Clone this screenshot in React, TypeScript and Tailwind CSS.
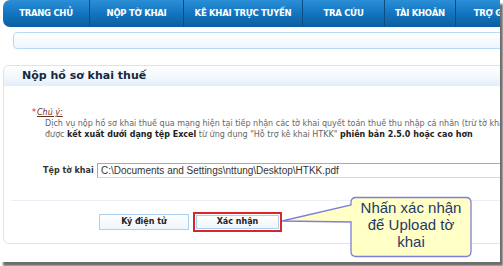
import React from "react";

const NAV = [
  { label: "TRANG CHỦ", w: "w-[86px]" },
  { label: "NỘP TỜ KHAI", w: "w-[94px]" },
  { label: "KÊ KHAI TRỰC TUYẾN", w: "w-[119px]" },
  { label: "TRA CỨU", w: "w-[82px]" },
  { label: "TÀI KHOẢN", w: "w-[71px]" },
  { label: "TRỢ GIÚP", w: "w-[80px]" },
];

const Callout = () => (
  <div className="absolute left-[280px] top-[195px] w-[194px] h-[64px]">
    <svg width="194" height="64" className="absolute left-0 top-0">
      <path
        d="M76 2.5 H186 Q191 2.5 191 7.5 V56.5 Q191 61.5 186 61.5 H76 Q71 61.5 71 56.5 V27 L2 26 L71 10 V7.5 Q71 2.5 76 2.5 Z"
        fill="#ffffc6"
        stroke="#7f7fd8"
        strokeWidth="1.3"
      />
    </svg>
    <div className="absolute left-[71px] top-[4px] w-[120px] text-center text-[15px] leading-[17px] text-[#1f3a68] [font-family:'Liberation_Sans',Arial,sans-serif]">
      Nhấn xác nhận
      <br />
      để Upload tờ
      <br />
      khai
    </div>
  </div>
);

export default function App() {
  return (
    <div className="w-[503px] h-[266px] bg-white overflow-hidden">
      <div className="relative w-[500px] h-[262px] bg-white overflow-hidden shadow-[3px_4px_2px_rgba(60,60,60,0.75)] [font-family:'DejaVu_Sans',Tahoma,sans-serif]">
        {/* top nav */}
        <div className="ml-[3px] h-[27px] flex rounded-l-[7px] overflow-hidden bg-gradient-to-b from-[#2a8fd6] via-[#1275c0] to-[#0c5f9f]">
          {NAV.map((item, i) => (
            <div
              key={i}
              className={`${item.w} shrink-0 flex items-center justify-center whitespace-nowrap text-white font-bold text-[8.5px] tracking-[-0.3px] ${
                i > 0 ? "border-l border-[#0a4f84]" : ""
              }`}
            >
              {item.label}
            </div>
          ))}
        </div>

        {/* breadcrumb strip */}
        <div className="ml-[13px] mt-[5px] w-[520px] h-[17px] rounded-[4px] border border-[#b7d9f3] bg-gradient-to-b from-white to-[#eef6fd]" />

        {/* panel */}
        <div className="ml-[3px] mt-[16px] w-[520px] h-[179px] rounded-[6px] border border-[#d3e6f5]">
          <div className="h-[20px] flex items-center pl-[18px] rounded-t-[6px] bg-gradient-to-b from-white via-[#f4f9fe] to-[#e2eefa] text-[11px] font-bold text-[#16283c]">
            Nộp hồ sơ khai thuế
          </div>

          <div className="pl-[28px] pt-[21px] text-[8px] leading-[11px] text-[#666] whitespace-nowrap">
            <div className="flex items-center">
              <span className="text-[#e02020] mr-[1px]">*</span>
              <span className="italic underline text-[#6b2f1f]">Chú ý:</span>
            </div>
            <div className="pl-[13px]">
              Dịch vụ nộp hồ sơ khai thuế qua mạng hiện tại tiếp nhận các tờ khai quyết toán thuế thu nhập cá nhân (trừ tờ khai
            </div>
            <div className="pl-[13px]">
              được <b className="text-[#222]">kết xuất dưới dạng tệp Excel</b> từ ứng dụng "Hỗ trợ kê khai HTKK"{" "}
              <b className="text-[#222]">phiên bản 2.5.0 hoặc cao hơn</b>
            </div>
          </div>

          <div className="flex items-center mt-[23px] pl-[39px]">
            <div className="w-[54px] text-[8px] font-bold text-[#333]">Tệp tờ khai</div>
            <div className="w-[420px] h-[15px] border border-[#a9a9a9] border-b-[#d8d8d8] flex items-center pl-[3px] text-[10px] text-[#333] [font-family:'Liberation_Sans',Arial,sans-serif] whitespace-nowrap">
              C:\Documents and Settings\nttung\Desktop\HTKK.pdf
            </div>
          </div>

          <div className="ml-[7px] mt-[22px] h-px bg-[#e8eff6]" />

          <div className="flex items-center mt-[11px] pl-[95px] gap-[4px]">
            <div className="w-[90px] h-[16px] border border-[#a9d1f1] bg-gradient-to-b from-white to-[#eef5fc] flex items-center justify-center text-[8px] font-bold text-[#222]">
              Ký điện tử
            </div>
            <div className="w-[89px] h-[20px] border-2 border-[#d9262b] flex items-center justify-center">
              <div className="w-[83px] h-[14px] border border-[#a9d1f1] bg-gradient-to-b from-white to-[#eef5fc] flex items-center justify-center text-[8px] font-bold text-[#222]">
                Xác nhận
              </div>
            </div>
          </div>
        </div>

        <Callout />
      </div>
    </div>
  );
}
